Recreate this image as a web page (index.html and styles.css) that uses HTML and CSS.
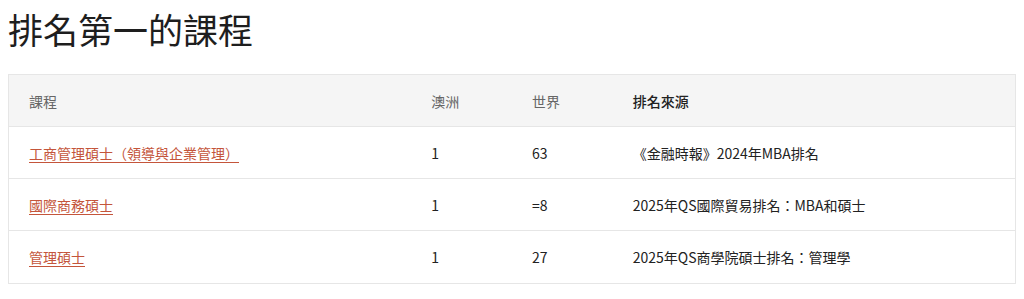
FILE: index.html
```html
<!DOCTYPE html>
<html lang="zh-Hant">
<head>
<meta charset="utf-8">
<title>排名第一的課程</title>
<link rel="stylesheet" href="styles.css">
</head>
<body>
<h1 class="title">排名第一的課程</h1>
<table class="rank-table">
  <colgroup>
    <col class="c-wide"><col class="c-narrow"><col class="c-narrow"><col class="c-wide">
  </colgroup>
  <thead>
    <tr>
      <th class="muted">課程</th>
      <th class="muted">澳洲</th>
      <th class="muted">世界</th>
      <th class="strong">排名來源</th>
    </tr>
  </thead>
  <tbody>
    <tr>
      <td><a class="course" href="#">工商管理碩士（領導與企業管理）</a></td>
      <td>1</td>
      <td>63</td>
      <td>《金融時報》2024年MBA排名</td>
    </tr>
    <tr>
      <td><a class="course" href="#">國際商務碩士</a></td>
      <td>1</td>
      <td>=8</td>
      <td>2025年QS國際貿易排名：MBA和碩士</td>
    </tr>
    <tr>
      <td><a class="course" href="#">管理碩士</a></td>
      <td>1</td>
      <td>27</td>
      <td>2025年QS商學院碩士排名：管理學</td>
    </tr>
  </tbody>
</table>
</body>
</html>
```

FILE: styles.css
```css
body {
  margin: 8px;
  font-family: "Noto Sans CJK TC", "Noto Sans", sans-serif;
  color: #222;
  background: #fff;
}
.title {
  margin: 0 0 24px 0;
  font-size: 35px;
  line-height: 42px;
  font-weight: 400;
  color: #1e1e1e;
}
.rank-table {
  width: 100%;
  border-collapse: collapse;
  table-layout: fixed;
  border: 1px solid #e6e6e6;
  font-size: 14px;
}
.c-wide { width: 40%; }
.c-narrow { width: 10%; }
.rank-table th,
.rank-table td {
  text-align: left;
  padding: 0 20px;
  height: 51px;
  line-height: 20px;
  vertical-align: middle;
  border-bottom: 1px solid #e6e6e6;
}
.rank-table tbody tr:last-child td {
  height: 52px;
}
.rank-table thead tr {
  background: #f5f5f5;
}
.rank-table th {
  font-weight: 400;
}
.rank-table th.muted { color: #666; }
.rank-table th.strong { color: #222; font-weight: 500; }
.course {
  color: #c4553b;
  text-decoration: underline;
  text-underline-offset: 3px;
}
```
